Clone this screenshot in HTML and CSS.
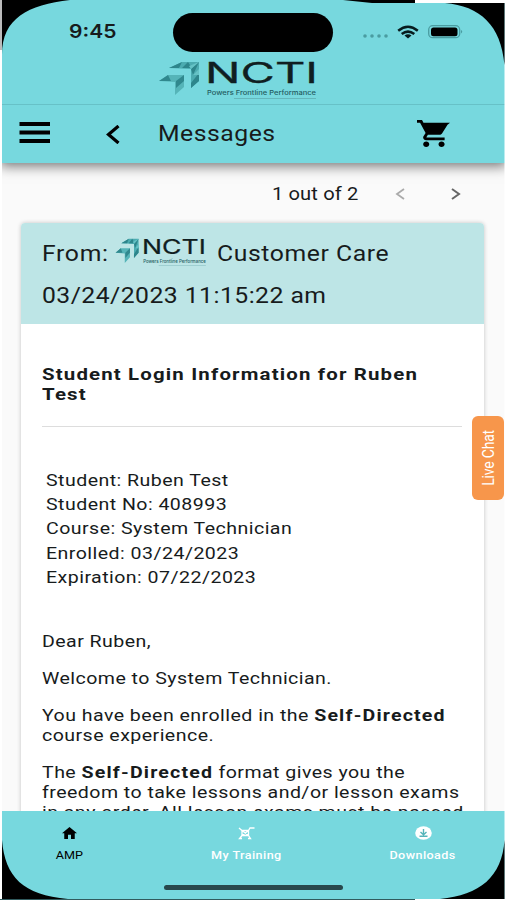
FILE: index.html
```html
<!DOCTYPE html>
<html lang="en">
<head>
<meta charset="utf-8">
<title>Messages</title>
<link rel="stylesheet" href="styles.css">
</head>
<body>
<div class="phone">
  <header class="top">
    <div class="status">
      <span class="clock">9:45</span>
      <span class="island"></span>
      <svg class="signals" width="102" height="18" viewBox="0 0 102 18">
        <g fill="#4a9ca1"><circle cx="3" cy="14" r="1.800"/><circle cx="10" cy="14" r="1.800"/><circle cx="17" cy="14" r="1.800"/><circle cx="24" cy="14" r="1.800"/></g>
        <g fill="none" stroke="#071b1d" stroke-width="2.500"><path d="M36.200 8.700Q46 .800 55.800 8.700"/><path d="M39.700 12Q46 7.200 52.300 12"/></g>
        <path d="M42.500 13.500Q46 11.200 49.500 13.500L46 16.500Z" fill="#071b1d"/>
        <rect x="66.700" y="3.700" width="31" height="12" rx="4" fill="none" stroke="#4a9ca1" stroke-width="1.300"/>
        <rect x="69" y="5.400" width="26.500" height="8.800" rx="2.500" fill="#000"/>
        <path d="M99 8Q101.500 9.700 99 11.500Z" fill="#4a9ca1"/>
      </svg>
    </div>
    <svg class="brand" width="160" height="38" viewBox="0 0 160 38">
      <g id="arrow">
        <path d="M11 7 24 1H41V20L33 27V8Z" fill="#4babb0"/>
        <path d="M11 7 24 1 21 7M24 7 30 1 34 7M33 8 41 1 35 14M33 22 41 12V20L33 27Z" fill="#2d858b"/>
        <path d="M41 1 31 5 33 8ZM35 14 41 8V14Z" fill="#65c2c5"/>
        <path d="M1 20 10 14H26V26L17 34V21Z" fill="#55b4b8"/>
        <path d="M1 20 10 14 13 20M18 20 26 14V20L18 27Z" fill="#30888e"/>
      </g>
      <text x="47" y="21.5" textLength="113" lengthAdjust="spacingAndGlyphs" class="wordmark">NCTI</text>
      <text x="49" y="34" textLength="109" lengthAdjust="spacingAndGlyphs" class="tagline">Powers Frontline Performance</text>
      <path d="M76 37.500H158" stroke="#54969b" stroke-width=".5"/>
    </svg>
    <nav class="appbar">
      <svg class="menu" width="32" height="22" viewBox="0 0 32 22"><path d="M.5 2H31M.5 10.500H31M.5 19H31" stroke="#000" stroke-width="4"/></svg>
      <svg class="back" width="14" height="19" viewBox="0 0 14 19"><path d="M12.500 1 2.500 9.500 12.500 18" fill="none" stroke="#000" stroke-width="3.200"/></svg>
      <h1><span class="wide">Messages</span></h1>
      <svg class="cart" width="33" height="27" viewBox="1 2 21.500 20" preserveAspectRatio="none"><path d="M7 18c-1.100 0-1.990.9-1.990 2S5.900 22 7 22s2-.9 2-2-.9-2-2-2zM1 2v2h2l3.600 7.590-1.350 2.450c-.16.28-.25.61-.25.960 0 1.100.9 2 2 2h12v-2H7.420c-.14 0-.25-.11-.25-.25l.03-.12.9-1.630h7.450c.75 0 1.410-.41 1.750-1.030l3.580-6.490L22.500 4H5.210l-.94-2H1zm16 16c-1.100 0-1.990.9-1.990 2s.89 2 1.990 2 2-.9 2-2-.9-2-2-2z"/></svg>
    </nav>
  </header>
  <main>
    <div class="pager">
      <span class="wide count">1 out of 2</span>
      <svg width="10" height="12" viewBox="0 0 10 12"><path d="M9 1 2 6 9 11" fill="none" stroke="#aaa" stroke-width="1.800"/></svg>
      <svg width="10" height="12" viewBox="0 0 10 12"><path d="M1 1 8 6 1 11" fill="none" stroke="#666" stroke-width="2"/></svg>
    </div>
    <article class="card">
      <div class="from">
        <div class="sender"><span class="wide label">From:</span><svg class="mini" width="92" height="28" viewBox="0 0 160 38" preserveAspectRatio="none">
          <use href="#arrow"/>
          <text x="47" y="21.5" textLength="111" lengthAdjust="spacingAndGlyphs" class="wordmark">NCTI</text>
          <text x="49" y="34" textLength="109" lengthAdjust="spacingAndGlyphs" class="tagline">Powers Frontline Performance</text>
          <path d="M76 37.500H158" stroke="#54969b" stroke-width=".5"/>
        </svg><span class="wide care">Customer Care</span></div>
        <div class="wide date">03/24/2023 11:15:22 am</div>
      </div>
      <div class="body">
        <h2 class="wide">Student Login Information for Ruben<br>Test</h2>
        <hr>
        <div class="wide details">Student: Ruben Test<br>Student No: 408993<br>Course: System Technician<br>Enrolled: 03/24/2023<br>Expiration: 07/22/2023</div>
        <p class="wide">Dear Ruben,</p>
        <p class="wide">Welcome to System Technician.</p>
        <p class="wide">You have been enrolled in the <b>Self-Directed</b><br>course experience.</p>
        <p class="wide">The <b>Self-Directed</b> format gives you the<br>freedom to take lessons and/or lesson exams<br>in any order. All lesson exams must be passed</p>
      </div>
    </article>
  </main>
  <footer>
    <div class="tabs">
      <div class="tab active"><svg width="15" height="12" viewBox="2 3 20 17" preserveAspectRatio="none"><path d="M10 20v-6h4v6h5v-8h3L12 3 2 12h3v8z" fill="#000"/></svg><span>AMP</span></div>
      <div class="tab"><svg width="17" height="14" viewBox="0 0 17 14"><g fill="none" stroke="#fff" stroke-width="1.300"><path d="M1 2 4 4.500H10.500V9.500H4V4.500M10.500 4.500 12 2H16.500M4 9.500 1.500 12.500H4M10.500 9.500 12.500 12.500H10M4 4.500 10.500 9.500M10.500 4.500 4 9.500"/></g></svg><span>My Training</span></div>
      <div class="tab"><svg width="17" height="14" viewBox="0 0 17 14"><ellipse cx="8.500" cy="7" rx="8.300" ry="6.800" fill="#fff"/><path d="M8.500 3V8M5.500 6 8.500 8.700 11.500 6M4.500 10.300H12.500" fill="none" stroke="#55b4b9" stroke-width="1.400"/></svg><span>Downloads</span></div>
    </div>
    <div class="home"></div>
  </footer>
  <div class="chat"><span>Live Chat</span></div>
  <svg class="bezel" width="507" height="900" viewBox="0 0 507 900">
    <path d="M0 0H2V900H0ZM504.500 0H507V900H504.500ZM415 0H507V3H415ZM415 899H507V900H415Z" fill="#fff"/>
    <path d="M0 0H2V50H0Z" fill="#bbb"/>
    <path d="M2 0H70C28 5 2 18 2 55ZM343 0H415V3H372ZM445 3H504.500V65C501 25 480 6 445 3ZM2 840C5 877 23 895 68 899H2ZM504.500 840C502 877 480 895 440 899H504.500Z" fill="#000"/>
    <path d="M0 899H415V900H0Z" fill="#315b5e"/>
  </svg>
</div>
</body>
</html>
```
FILE: styles.css
```css
* { box-sizing: border-box; }
body { margin: 0; background: #fafafa; font-family: Roboto, "Liberation Sans", sans-serif; color: #171b1c; }
.phone { position: relative; width: 507px; height: 900px; overflow: hidden; display: flex; flex-direction: column; }
.wide { display: block; width: max-content; white-space: nowrap; transform: scaleX(1.15); transform-origin: left; letter-spacing: .4px; }
.wordmark { font: 400 28px Inter, sans-serif; fill: #101e21; stroke: #101e21; stroke-width: .3px; }
.tagline { font: 500 6.5px Inter, sans-serif; fill: #235c61; }

.top { height: 163px; flex: none; background: #77d8de; box-shadow: 0 3px 12px rgba(0,0,0,.55); z-index: 1; }
.status { height: 61px; padding: 13px 0 0 69px; display: flex; }
.clock { width: 104px; padding-top: 8px; font: 600 18px/22px Inter, sans-serif; transform: scaleX(1.17); transform-origin: left; }
.island { width: 160px; height: 39px; border-radius: 20px; background: #000; }
.signals { margin: 9px 0 0 29px; }
.brand { display: block; margin-left: 158px; }
.appbar { height: 59px; margin-top: 5px; border-top: 1px solid #67c1c7; display: flex; align-items: center; padding-left: 19px; }
.back { margin-left: 55px; }
h1 { margin: -2px 0 0 38px; width: 259px; font-size: 21.5px; font-weight: 400; }
h1 .wide { letter-spacing: .45px; }
.menu { margin-bottom: 3px; }
.cart { margin-bottom: 1px; }

main { flex: 1; min-height: 0; padding: 0 23px 0 21px; }
.pager { height: 62px; margin-bottom: -2px; padding-left: 251px; display: flex; align-items: center; }
.pager .count { width: 123px; font-size: 17.5px; letter-spacing: .1px; }
.pager svg + svg { margin-left: 46px; }
.card { height: 700px; background: #fff; border-radius: 4px; box-shadow: 0 0 4px rgba(0,0,0,.22); overflow: hidden; }
.from { height: 101px; padding: 10px 21px 9px; background: #bde5e6; font-size: 21.5px; line-height: 42px; }
.from .wide { letter-spacing: .4px; }
.from .label { width: 73px; letter-spacing: .6px; }
.from .care { letter-spacing: .52px; }
.sender { display: flex; height: 42px; }
.mini { margin-top: 5px; width: 92px; }
.care { margin-left: 10px; }
.body { padding: 40px 22px 0 21px; font-size: 17px; line-height: 20px; }
h2 { margin: 0; font-size: 17px; line-height: 20px; font-weight: 700; }
h2.wide { transform: scaleX(1.2); letter-spacing: .97px; }
b { letter-spacing: 1.03px; }
hr { margin: 22px 0 41px; border: 0; border-top: 1.5px solid #ddd; }
.details { margin-left: 4px; line-height: 24.2px; margin-bottom: 42px; }
p { margin: 0 0 17px; }

footer { height: 89px; flex: none; background: #77d8de; z-index: 1; }
.tabs { display: flex; height: 74px; padding: 15px 0 0 2px; }
.tab { width: 135px; display: flex; flex-direction: column; align-items: center; color: #fff; font-size: 10.5px; font-weight: 500; letter-spacing: .35px; }
.tab:nth-child(2) { width: 218px; }
.tab:nth-child(3) { width: 136px; }
.tab span { margin-top: 9px; line-height: 13px; transform: scaleX(1.2); }
.tab.active { color: #000; letter-spacing: 0; font-weight: 400; }
.active svg { margin: 1px 0; }
.home { width: 179px; height: 5px; margin-left: 164px; border-radius: 3px; background: #28484c; }
.chat { position: absolute; z-index: 2; left: 472px; top: 416px; width: 32px; height: 84px; border-radius: 6px; background: #f7964b; display: grid; place-items: center; color: #fff; font-size: 14px; }
.chat span { writing-mode: vertical-rl; transform: rotate(180deg) scaleX(1.12); letter-spacing: -.2px; }
.bezel { position: absolute; left: 0; top: 0; z-index: 3; pointer-events: none; }
```
